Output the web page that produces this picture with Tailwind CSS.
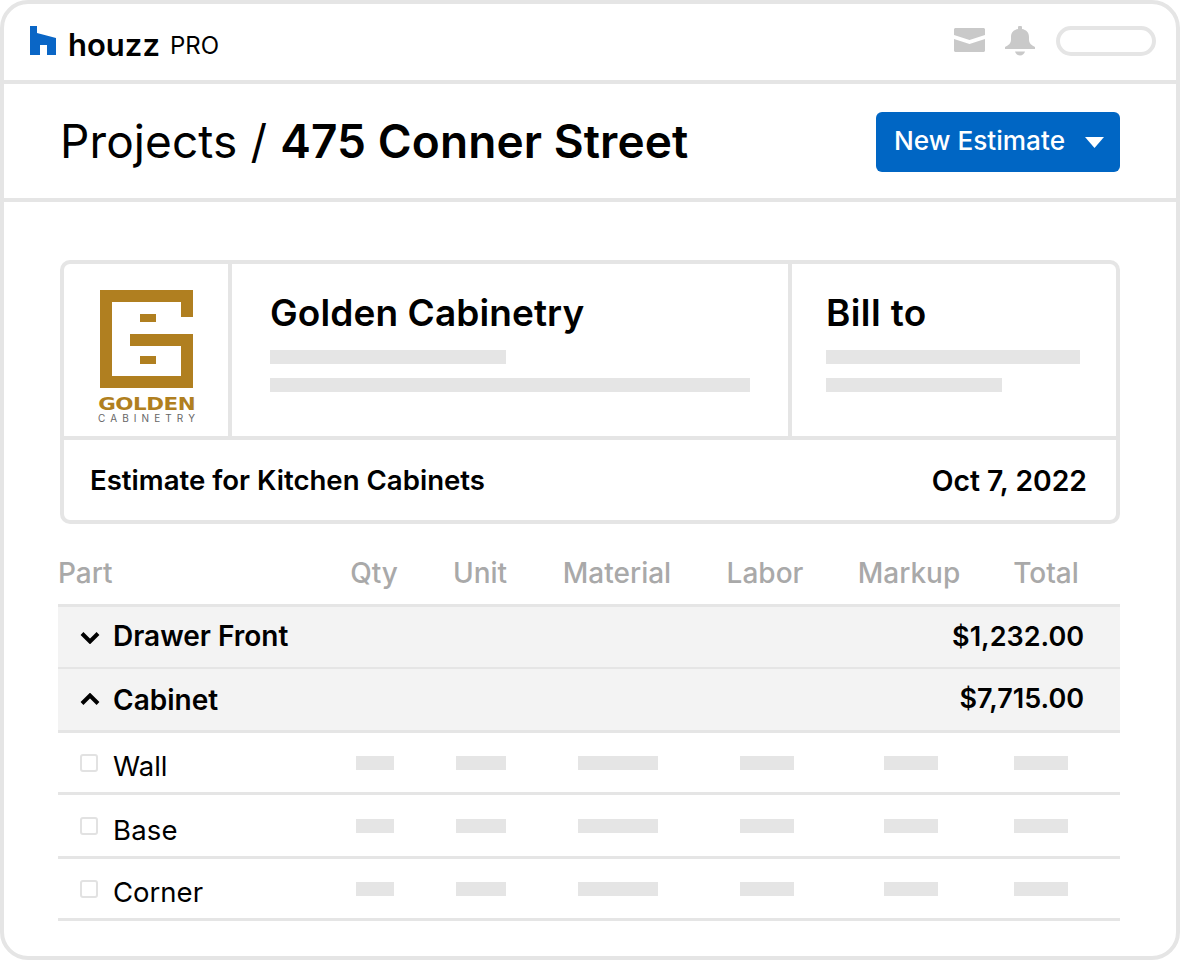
<!DOCTYPE html>
<html lang="en">
  <head>
    <meta charset="UTF-8" />
    <script src="https://cdn.jsdelivr.net/npm/@tailwindcss/browser@4"></script>
    <title>Houzz Pro estimate</title>
  </head>
  <body class="bg-white text-black font-['Inter',sans-serif]">
    <div class="w-[1180px] h-[960px] border-4 border-[#e5e5e5] rounded-[28px] bg-white overflow-hidden">
      <!-- top bar -->
      <div class="h-[80px] border-b-4 border-[#e5e5e5] flex items-center pl-[26px] pr-[20px]">
        <svg width="26" height="29" viewBox="0 0 26 29" class="mt-[-3px]"><path fill="#0a66c6" d="M0 0h7v7l19 5v17h-9V19h-7v10H0z"/></svg>
        <span class="ml-[12px] text-[31px] font-semibold leading-none mt-[4px]">houzz</span>
        <span class="ml-[10px] text-[24px] leading-none mt-[7px]">PRO</span>
        <div class="ml-auto flex items-center mt-[-2px]">
          <svg width="31" height="24" viewBox="0 0 31 24" class="mt-[-2px]"><path fill="#c9c9c9" d="M1 0h29l1 1v6l-15.500 5L0 7V1zM0 11l15.500 5L31 11v12l-1 1H1l-1-1z"/></svg>
          <svg width="30" height="30" viewBox="0 0 30 30" class="ml-[20px]"><path fill="#c9c9c9" d="M13 1.500a2 2 0 0 1 4 0V3c4 .8 7 3 7 8v3c0 3 2 5 6 7v2H0v-2c4-2 6-4 6-7v-3c0-5 3-7.200 7-8zM10 25.500h10c-.5 2-2.500 4-5 4s-4.500-2-5-4z"/></svg>
          <div class="ml-[21px] w-[100px] h-[30px] rounded-full border-4 border-[#e5e5e5]"></div>
        </div>
      </div>
      <!-- title -->
      <div class="h-[118px] border-b-4 border-[#e5e5e5] flex items-center pl-[56px] pr-[56px] pt-[2px]">
        <h1 class="text-[46px] tracking-[0.1px] leading-none mb-[2px]">Projects / <span class="font-semibold">475 Conner Street</span></h1>
        <button class="ml-auto w-[244px] h-[60px] rounded-[6px] bg-[#0066c4] text-white text-[26.200px] font-medium flex items-center pl-[18px]">
          <span class="mt-[-2px]">New Estimate</span>
          <svg width="19" height="11" viewBox="0 0 19 11" class="ml-[20px]"><path fill="#fff" d="M0 0h19l-9.500 11z"/></svg>
        </button>
      </div>
      <div class="pt-[58px] pl-[54px] pr-[56px]">
        <!-- estimate card -->
        <div class="ml-[2px] w-[1060px] h-[264px] border-4 border-[#e5e5e5] rounded-[10px]">
          <div class="h-[176px] border-b-4 border-[#e5e5e5] flex">
            <div class="w-[168px] border-r-4 border-[#e5e5e5] flex flex-col items-center pt-[26px] pl-[1px]">
              <svg width="94" height="98" viewBox="0 0 94 98"><path fill="#b07f20" d="M0 0h93v27H81V12H12v74h69V56H30V44h63v54H0zM40 24h16v8H40zM40 66h16v8H40z"/></svg>
              <div class="mt-[8px] text-[18px] font-['DejaVu_Sans'] font-bold leading-[15px] tracking-[-0.4px] text-[#b07f20] scale-x-[1.19]">GOLDEN</div>
              <div class="mt-[2px] text-[10px] leading-[10px] tracking-[5.100px] text-[#666] pl-[5px]">CABINETRY</div>
            </div>
            <div class="w-[560px] border-r-4 border-[#e5e5e5] pl-[38px] pt-[26px]">
              <div class="text-[37px] tracking-[0.1px] font-semibold leading-[46px]">Golden Cabinetry</div>
              <div class="mt-[14px] w-[236px] h-[14px] bg-[#e5e5e5]"></div>
              <div class="mt-[14px] w-[480px] h-[14px] bg-[#e5e5e5]"></div>
            </div>
            <div class="flex-1 pl-[34px] pt-[26px]">
              <div class="text-[37px] tracking-[0.4px] font-semibold leading-[46px]">Bill to</div>
              <div class="mt-[14px] w-[254px] h-[14px] bg-[#e5e5e5]"></div>
              <div class="mt-[14px] w-[176px] h-[14px] bg-[#e5e5e5]"></div>
            </div>
          </div>
          <div class="h-[80px] pt-[2px] flex items-center justify-between pl-[26px] pr-[29px] text-[27.600px] font-semibold">
            <span>Estimate for Kitchen Cabinets</span>
            <span class="text-[28.300px]">Oct 7, 2022</span>
          </div>
        </div>
        <!-- table -->
        <div class="mt-[28px] h-[55px] pb-[12px] grid grid-cols-[270px_92px_120px_154px_142px_146px_128px] items-center text-[28px] text-[#a9a9a9] border-b-[3px] border-[#e5e5e5] font-medium">
          <span>Part</span>
          <span class="text-center">Qty</span>
          <span class="text-center">Unit</span>
          <span class="text-center">Material</span>
          <span class="text-center">Labor</span>
          <span class="text-center">Markup</span>
          <span class="text-center">Total</span>
        </div>
        <div class="h-[62px] bg-[#f3f3f3] border-b-2 border-[#e5e5e5] flex items-center pl-[22px] pr-[36px] text-[27px] font-semibold">
          <svg width="20" height="13" viewBox="0 0 20 13"><path fill="none" stroke="#000" stroke-width="4" d="M2 2.500l8 8 8-8"/></svg>
          <span class="ml-[13px] text-[28px] mt-[-2px]">Drawer Front</span>
          <span class="ml-auto">$1,232.00</span>
        </div>
        <div class="h-[64px] bg-[#f3f3f3] border-b-[3px] border-[#e5e5e5] flex items-center pl-[22px] pr-[36px] text-[27px] font-semibold">
          <svg width="20" height="13" viewBox="0 0 20 13"><path fill="none" stroke="#000" stroke-width="4" d="M2 10.500l8-8 8 8"/></svg>
          <span class="ml-[13px] text-[28px]">Cabinet</span>
          <span class="ml-auto">$7,715.00</span>
        </div>
        <div class="h-[62px] border-b-[3px] border-[#e5e5e5] grid grid-cols-[298px_100px_122px_162px_144px_130px_130px] items-center text-[27.500px]">
          <div class="flex items-center pl-[22px]"><span class="w-[18px] h-[18px] border-2 border-[#e2e2e2] rounded-[3px]"></span><span class="ml-[15px] mt-[8px]">Wall</span></div>
          <span class="w-[38px] h-[14px] bg-[#e5e5e5]"></span>
          <span class="w-[50px] h-[14px] bg-[#e5e5e5]"></span>
          <span class="w-[80px] h-[14px] bg-[#e5e5e5]"></span>
          <span class="w-[54px] h-[14px] bg-[#e5e5e5]"></span>
          <span class="w-[54px] h-[14px] bg-[#e5e5e5]"></span>
          <span class="w-[54px] h-[14px] bg-[#e5e5e5]"></span>
        </div>
        <div class="h-[64px] border-b-[3px] border-[#e5e5e5] grid grid-cols-[298px_100px_122px_162px_144px_130px_130px] items-center text-[27.500px]">
          <div class="flex items-center pl-[22px]"><span class="w-[18px] h-[18px] border-2 border-[#e2e2e2] rounded-[3px]"></span><span class="ml-[15px] mt-[10px] tracking-[0.2px]">Base</span></div>
          <span class="w-[38px] h-[14px] bg-[#e5e5e5]"></span>
          <span class="w-[50px] h-[14px] bg-[#e5e5e5]"></span>
          <span class="w-[80px] h-[14px] bg-[#e5e5e5]"></span>
          <span class="w-[54px] h-[14px] bg-[#e5e5e5]"></span>
          <span class="w-[54px] h-[14px] bg-[#e5e5e5]"></span>
          <span class="w-[54px] h-[14px] bg-[#e5e5e5]"></span>
        </div>
        <div class="h-[62px] border-b-[3px] border-[#e5e5e5] grid grid-cols-[298px_100px_122px_162px_144px_130px_130px] items-center text-[27.500px]">
          <div class="flex items-center pl-[22px]"><span class="w-[18px] h-[18px] border-2 border-[#e2e2e2] rounded-[3px]"></span><span class="ml-[15px] mt-[8px]">Corner</span></div>
          <span class="w-[38px] h-[14px] bg-[#e5e5e5]"></span>
          <span class="w-[50px] h-[14px] bg-[#e5e5e5]"></span>
          <span class="w-[80px] h-[14px] bg-[#e5e5e5]"></span>
          <span class="w-[54px] h-[14px] bg-[#e5e5e5]"></span>
          <span class="w-[54px] h-[14px] bg-[#e5e5e5]"></span>
          <span class="w-[54px] h-[14px] bg-[#e5e5e5]"></span>
        </div>
      </div>
    </div>
  </body>
</html>
